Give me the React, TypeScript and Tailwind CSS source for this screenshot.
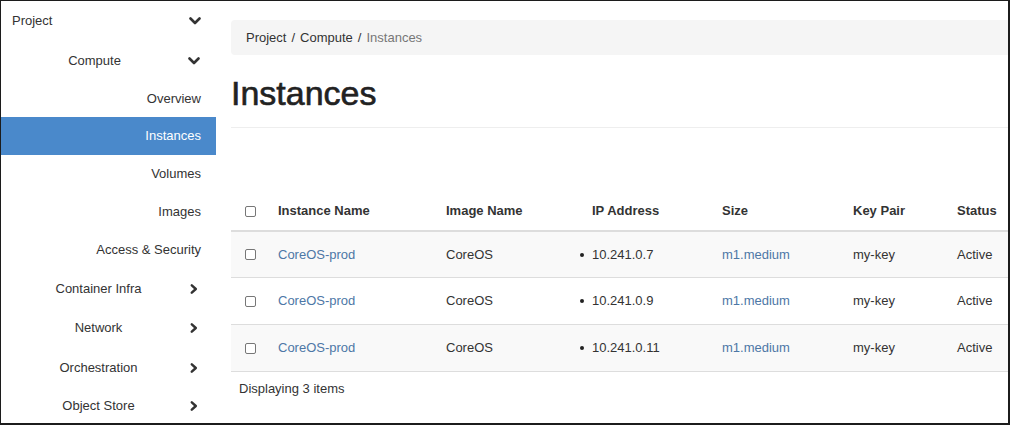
const font = { fontFamily: '"Liberation Sans", Arial, sans-serif' };

function ChevronDown() {
  return (
    <svg width="12" height="8" viewBox="0 0 12 8" className="shrink-0">
      <polyline points="1.5,1.5 6,6 10.5,1.5" fill="none" stroke="#333" strokeWidth="2.6" strokeLinecap="round" strokeLinejoin="round" />
    </svg>
  );
}

function ChevronRight() {
  return (
    <svg width="8" height="10" viewBox="0 0 8 10" className="shrink-0">
      <polyline points="1.8,1.3 5.8,5 1.8,8.7" fill="none" stroke="#333" strokeWidth="2.4" strokeLinecap="round" strokeLinejoin="round" />
    </svg>
  );
}

function Checkbox() {
  return <div className="w-[11px] h-[11px] rounded-[2px] border border-[#777] bg-white" />;
}

type NavItem = { label: string; h: string; kind: "top" | "group" | "leaf" | "active"; open?: boolean };

const nav: NavItem[] = [
  { label: "Project", h: "h-[40px]", kind: "top" },
  { label: "Compute", h: "h-[39px]", kind: "group", open: true },
  { label: "Overview", h: "h-[37px]", kind: "leaf" },
  { label: "Instances", h: "h-[38px]", kind: "active" },
  { label: "Volumes", h: "h-[38px]", kind: "leaf" },
  { label: "Images", h: "h-[38px]", kind: "leaf" },
  { label: "Access & Security", h: "h-[38px]", kind: "leaf" },
  { label: "Container Infra", h: "h-[39px]", kind: "group" },
  { label: "Network", h: "h-[40px]", kind: "group" },
  { label: "Orchestration", h: "h-[39px]", kind: "group" },
  { label: "Object Store", h: "h-[38px]", kind: "group" },
];

const rows = [
  { name: "CoreOS-prod", image: "CoreOS", ip: "10.241.0.7", size: "m1.medium", key: "my-key", status: "Active", h: "h-[46px]" },
  { name: "CoreOS-prod", image: "CoreOS", ip: "10.241.0.9", size: "m1.medium", key: "my-key", status: "Active", h: "h-[47px]" },
  { name: "CoreOS-prod", image: "CoreOS", ip: "10.241.0.11", size: "m1.medium", key: "my-key", status: "Active", h: "h-[47px]" },
];

const cols = "grid grid-cols-[39px_168px_138px_138px_131px_104px_1fr]";

export default function App() {
  return (
    <div style={font} className="w-[1010px] h-[425px] bg-white border-l border-t border-r-2 border-b-2 border-[#1c1c1c] flex overflow-hidden text-[13px] text-[#333]">
      <aside className="w-[215px] shrink-0 flex flex-col">
        {nav.map((n) => {
          if (n.kind === "top")
            return (
              <div key={n.label} className={`${n.h} shrink-0 flex items-center pl-[11px] pr-[15px]`}>
                <span className="flex-1">{n.label}</span>
                <ChevronDown />
              </div>
            );
          if (n.kind === "group")
            return (
              <div key={n.label} className={`${n.h} shrink-0 flex items-center pr-[16px]`}>
                <span className="w-[195px] text-center">{n.label}</span>
                {n.open ? <ChevronDown /> : <span className="ml-[-6px]"><ChevronRight /></span>}
              </div>
            );
          if (n.kind === "active")
            return (
              <div key={n.label} className={`${n.h} shrink-0 flex items-center justify-end pr-[15px] bg-[#4a89cb] text-white`}>
                {n.label}
              </div>
            );
          return (
            <div key={n.label} className={`${n.h} shrink-0 flex items-center justify-end pr-[15px]`}>
              {n.label}
            </div>
          );
        })}
      </aside>

      <main className="flex-1 pl-[15px] flex flex-col">
        <div className="mt-[19px] h-[35px] bg-[#f5f5f5] rounded-l-[4px] flex items-center pl-[15px] pt-[1px]">
          <span>Project</span>
          <span className="px-[5px]">/</span>
          <span>Compute</span>
          <span className="px-[5px]">/</span>
          <span className="text-[#777]">Instances</span>
        </div>

        <div className="pt-[21px] pb-[17px] border-b border-[#eee]">
          <h1 className="text-[34px] leading-[34px] text-[#222] [-webkit-text-stroke:0.6px_#222]">Instances</h1>
        </div>

        <div className="mt-[64px]">
          <div className={`${cols} h-[40px] items-center font-bold border-b-2 border-[#ddd]`}>
            <div className="pl-[14px]"><Checkbox /></div>
            <div className="pl-[8px]">Instance Name</div>
            <div className="pl-[8px]">Image Name</div>
            <div className="pl-[16px]">IP Address</div>
            <div className="pl-[8px]">Size</div>
            <div className="pl-[8px]">Key Pair</div>
            <div className="pl-[8px]">Status</div>
          </div>
          {rows.map((r, i) => (
            <div key={i} className={`${cols} ${r.h} items-center border-b border-[#ddd] ${i % 2 === 0 ? "bg-[#f9f9f9]" : "bg-white"}`}>
              <div className="pl-[14px]"><Checkbox /></div>
              <div className="pl-[8px] text-[#4d77a6]">{r.name}</div>
              <div className="pl-[8px]">{r.image}</div>
              <div className="pl-[4px] flex items-center">
                <span className="w-[4px] h-[4px] rounded-full bg-[#222] mr-[8px]" />
                {r.ip}
              </div>
              <div className="pl-[8px] text-[#4d77a6]">{r.size}</div>
              <div className="pl-[8px]">{r.key}</div>
              <div className="pl-[8px]">{r.status}</div>
            </div>
          ))}
          <div className="pt-[8px] pl-[8px] leading-[18px]">Displaying 3 items</div>
        </div>
      </main>
    </div>
  );
}
